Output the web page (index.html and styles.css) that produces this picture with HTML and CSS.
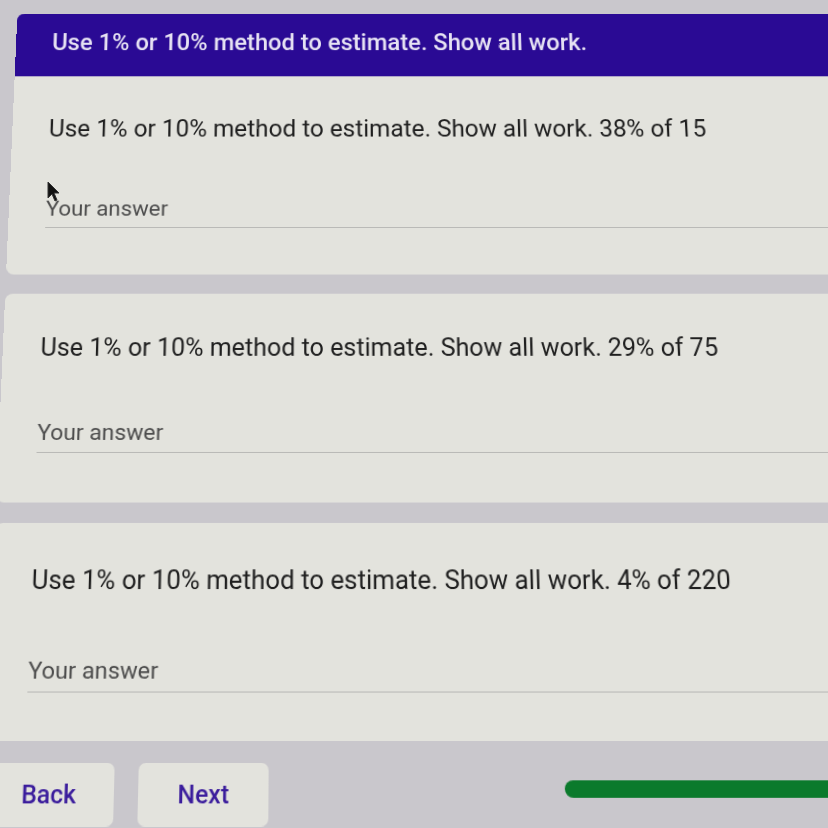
FILE: index.html
```html
<!DOCTYPE html>
<html lang="en">

<head>
    <meta charset="UTF-8">
    <meta name="viewport" content="width=device-width, initial-scale=1.0">
    <title>Percent estimates</title>
    <link rel="stylesheet" href="styles.css">
</head>

<body>
    <div class="screen">
        <div class="card first">
            <div class="banner">Use 1% or 10% method to estimate. Show all work.</div>
            <div class="item">
                <div class="question">Use 1% or 10% method to estimate. Show all work. 38% of 15</div>
                <div class="answer">Your answer</div>
            </div>
        </div>
        <div class="card">
            <div class="item">
                <div class="question">Use 1% or 10% method to estimate. Show all work. 29% of 75</div>
                <div class="answer">Your answer</div>
            </div>
        </div>
        <div class="card last">
            <div class="item">
                <div class="question">Use 1% or 10% method to estimate. Show all work. 4% of 220</div>
                <div class="answer">Your answer</div>
            </div>
        </div>
        <div class="nav">
            <button type="button" class="btn">Back</button>
            <button type="button" class="btn">Next</button>
            <div class="progress"></div>
        </div>
    </div>
    <!-- mouse pointer -->
    <svg class="cursor" width="14" height="22" viewBox="0 0 14 22">
        <path d="M1 1 L1 17 L5 13 L8 20 L10 19 L7 12 L12 12 Z" fill="#111" stroke="#333" stroke-width="1" />
    </svg>
</body>

</html>
```

FILE: styles.css
```css
body {
    margin: 0;
    padding: 0;
    background: #c9c7cc;
    overflow: hidden;
    font-family: Roboto, "Liberation Sans", sans-serif;
}

/* the photo is taken from below, so tilt the page a little */
.screen {
    margin-top: -12px;
    padding-bottom: 60px;
    width: 900px;
    transform: perspective(800px) rotateX(6.2deg);
    transform-origin: 320px 426px;
}

.card {
    background: #e3e3dd;
    border-radius: 8px;
    margin-bottom: 20px;
    overflow: hidden;
}

.banner {
    background: #2a0a94;
    color: #e6e2f3;
    font-size: 25px;
    font-weight: 500;
    height: 70px;
    line-height: 65px;
    padding-left: 38px;
}

.item {
    padding: 40px 38px 49px;
}

.first .item {
    padding-top: 42px;
}

.last .item {
    padding-bottom: 45px;
}

.question {
    font-size: 25.3px;
    line-height: 32px;
    color: #1f1f1f;
}

.answer {
    margin-top: 56px;
    padding-bottom: 5px;
    font-size: 22.8px;
    line-height: 28px;
    color: #4d4d4d;
    border-bottom: 1px solid #b9b9b6;
}

.nav {
    display: flex;
    align-items: center;
    gap: 23px;
    margin-top: 20px;
}

.btn {
    width: 124px;
    height: 58px;
    background: #e3e3dd;
    border: none;
    border-radius: 7px;
    color: #3a1c9c;
    font-family: Roboto, "Liberation Sans", sans-serif;
    font-size: 23.5px;
    font-weight: 500;
}

.progress {
    margin: 0 0 10px 259px;
    flex: 1;
    height: 16px;
    background: #0b7a2c;
    border-radius: 8px 0 0 8px;
}

.cursor {
    position: absolute;
    left: 47px;
    top: 181px;
}
```
